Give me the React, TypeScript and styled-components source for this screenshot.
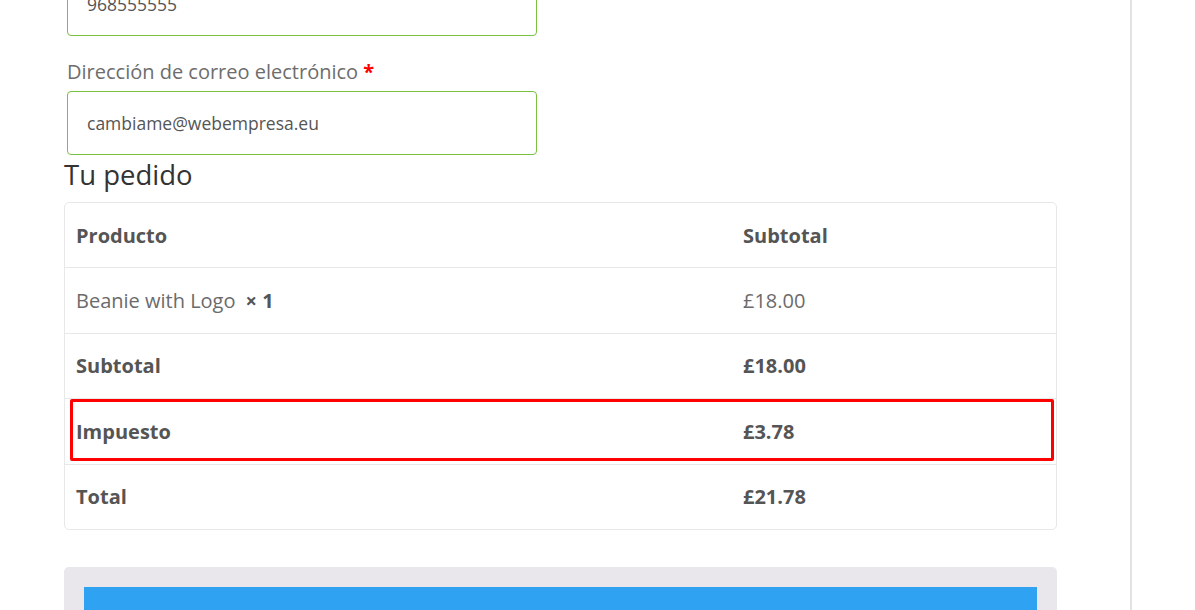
import React from "react";
import styled, { createGlobalStyle } from "styled-components";

const GlobalStyle = createGlobalStyle`
  html, body {
    margin: 0;
    padding: 0;
    background: #fff;
  }
  body {
    font-family: "Open Sans", "Noto Sans", sans-serif;
    color: #6b6b6b;
  }
`;

interface orderRow {
  label: string;
  value: string;
  qty?: number;
  bold?: boolean;
  highlight?: boolean;
}

const rows: orderRow[] = [
  { label: "Beanie with Logo", value: "£18.00", qty: 1 },
  { label: "Subtotal", value: "£18.00", bold: true },
  { label: "Impuesto", value: "£3.78", bold: true, highlight: true },
  { label: "Total", value: "£21.78", bold: true },
];

const App = () => {
  return (
    <PageLayout>
      <GlobalStyle />
      <Main>
        <FieldInput defaultValue="968555555" className="first" />
        <FieldLabel>
          Dirección de correo electrónico <abbr>*</abbr>
        </FieldLabel>
        <FieldInput defaultValue="cambiame@webempresa.eu" />
        <Heading>Tu pedido</Heading>
        <OrderTable>
          <Row>
            <Cell bold>Producto</Cell>
            <Cell bold>Subtotal</Cell>
          </Row>
          {rows.map((row, i) => (
            <Row key={i}>
              <Cell bold={row.bold}>
                {row.label}
                {row.qty && <Qty>×&nbsp;{row.qty}</Qty>}
              </Cell>
              <Cell bold={row.bold}>{row.value}</Cell>
              {row.highlight && <Highlight />}
            </Row>
          ))}
        </OrderTable>
        <PaymentBox>
          <PayBar />
        </PaymentBox>
      </Main>
      <SidePanel />
    </PageLayout>
  );
};

const PageLayout = styled.div`
  display: flex;
  height: 610px;
  overflow: hidden;
`;

const Main = styled.div`
  width: 1130px;
  flex-shrink: 0;
  padding-left: 64px;
  box-sizing: border-box;
  display: flex;
  flex-direction: column;
  align-items: flex-start;
  & > * {
    flex-shrink: 0;
  }
`;

const SidePanel = styled.div`
  flex-grow: 1;
  border-left: 2px solid #e2e2e2;
`;

const FieldInput = styled.input.attrs({ type: "text" })`
  width: 470px;
  height: 64px;
  box-sizing: border-box;
  margin-left: 3px;
  padding: 0 19px;
  border: 1px solid #7ac142;
  border-radius: 4px;
  font-family: "Open Sans", sans-serif;
  font-size: 17.5px;
  color: #555;
  background: #fff;
  outline: none;
  &.first {
    margin-top: -28px;
  }
`;

const FieldLabel = styled.label`
  margin: 22px 0 5px 3px;
  font-size: 20px;
  line-height: 28px;
  color: #6d6d6d;
  abbr {
    color: #f00;
    font-weight: 700;
    text-decoration: none;
  }
`;

const Heading = styled.h3`
  margin: 0 0 5px;
  font-size: 27.5px;
  font-weight: 400;
  line-height: 40px;
  padding-bottom: 2px;
  color: #333;
`;

const OrderTable = styled.div`
  width: 993px;
  box-sizing: border-box;
  border: 1px solid #e8e8e8;
  border-radius: 5px;
`;

const Row = styled.div`
  position: relative;
  display: grid;
  grid-template-columns: 667px 1fr;
  height: 64.4px;
  align-items: center;
  & + & {
    border-top: 1px solid #e8e8e8;
  }
`;

const Cell = styled.div<{ bold?: boolean }>`
  padding-left: 11px;
  font-size: 20px;
  font-weight: ${(p) => (p.bold ? 700 : 400)};
  color: ${(p) => (p.bold ? "#555" : "#6b6b6b")};
`;

const Qty = styled.strong`
  margin-left: 10px;
  color: #555;
`;

const Highlight = styled.div`
  position: absolute;
  left: 5px;
  top: 0;
  width: 984px;
  height: 62px;
  box-sizing: border-box;
  border: 3px solid #ff0000;
  border-radius: 2px;
`;

const PaymentBox = styled.div`
  width: 993px;
  margin-top: 37px;
  padding: 20px 20px 0;
  box-sizing: border-box;
  background: #e9e7eb;
  border-radius: 5px 5px 0 0;
`;

const PayBar = styled.div`
  height: 60px;
  background: #2fa3f2;
`;

export default App;
